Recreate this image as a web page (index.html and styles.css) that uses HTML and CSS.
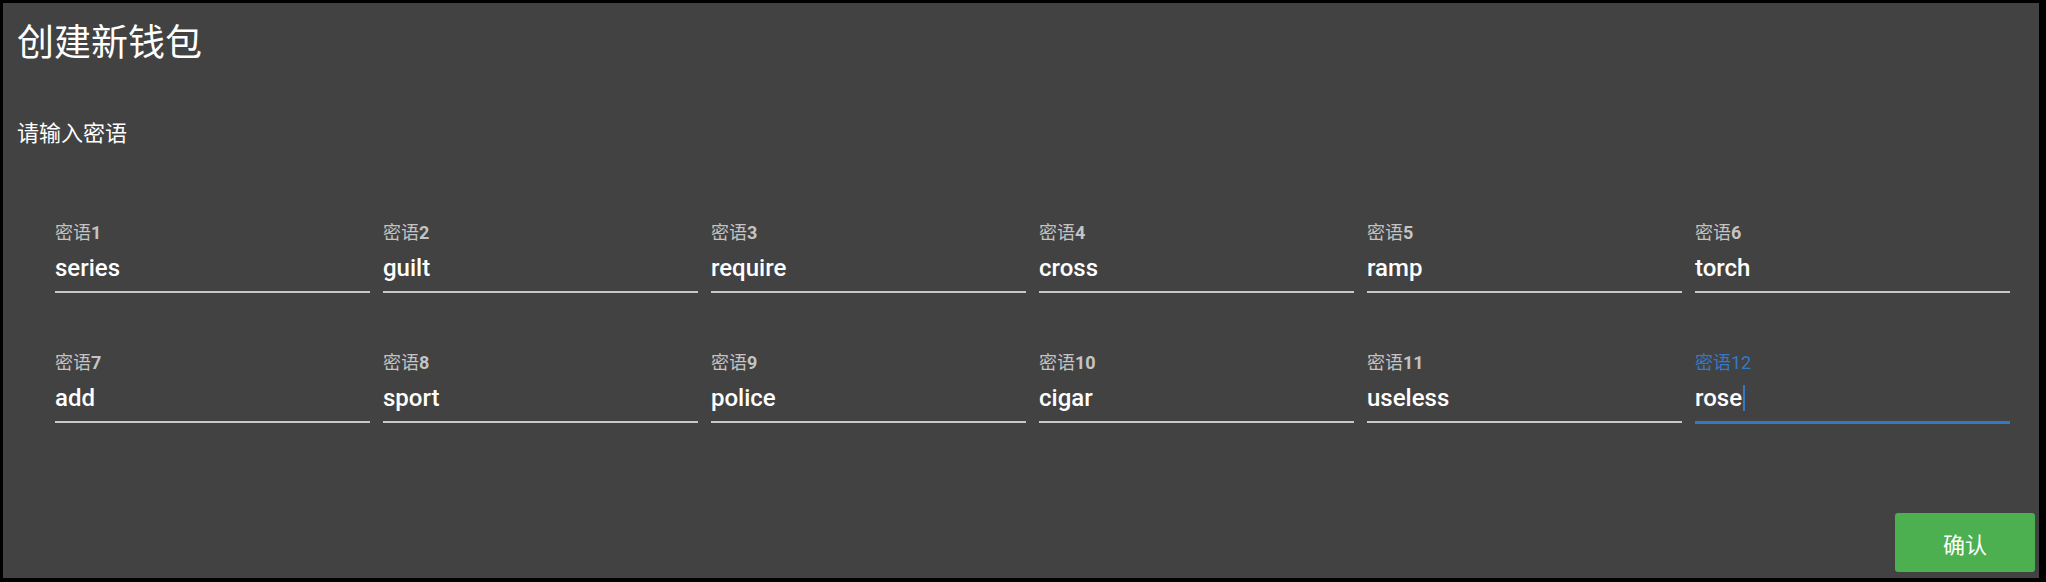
FILE: index.html
```html
<!DOCTYPE html>
<html lang="zh-CN">
<head>
    <meta charset="UTF-8">
    <meta name="viewport" content="width=device-width, initial-scale=1.0">
    <title>创建新钱包</title>
    <link rel="stylesheet" href="styles.css">
</head>
<body>
    <div class="dialog">
        <h1 class="dialog-title">创建新钱包</h1>
        <p class="dialog-hint">请输入密语</p>

        <div class="words">
            <div class="field"><label>密语<b>1</b></label><div class="value">series</div></div>
            <div class="field"><label>密语<b>2</b></label><div class="value">guilt</div></div>
            <div class="field"><label>密语<b>3</b></label><div class="value">require</div></div>
            <div class="field"><label>密语<b>4</b></label><div class="value">cross</div></div>
            <div class="field"><label>密语<b>5</b></label><div class="value">ramp</div></div>
            <div class="field"><label>密语<b>6</b></label><div class="value">torch</div></div>
            <div class="field"><label>密语<b>7</b></label><div class="value">add</div></div>
            <div class="field"><label>密语<b>8</b></label><div class="value">sport</div></div>
            <div class="field"><label>密语<b>9</b></label><div class="value">police</div></div>
            <div class="field"><label>密语<b>10</b></label><div class="value">cigar</div></div>
            <div class="field"><label>密语<b>11</b></label><div class="value">useless</div></div>
            <div class="field focused"><label>密语<b>12</b></label><div class="value">rose<span class="caret"></span></div></div>
        </div>

        <div class="actions">
            <button type="button" class="confirm-btn">确认</button>
        </div>
    </div>
</body>
</html>
```

FILE: styles.css
```css
html, body {
    height: 100%;
}

body {
    margin: 0;
    background-color: #000;
    font-family: Roboto, "Noto Sans CJK SC", sans-serif;
}

.dialog {
    box-sizing: border-box;
    height: calc(100% - 7px);
    margin: 3px 7px 4px 3px;
    padding: 19px 0 0 14px;
    background-color: #424242;
    color: #fff;
    display: flex;
    flex-direction: column;
}

.dialog-title {
    margin: 0;
    font-family: "Noto Sans CJK SC", sans-serif;
    font-size: 37px;
    font-weight: 400;
    line-height: 37px;
}

.dialog-hint {
    margin: 61px 0 0;
    font-family: "Noto Sans CJK SC", sans-serif;
    font-size: 22px;
    line-height: 22px;
}

.words {
    display: grid;
    grid-template-columns: repeat(6, 1fr);
    column-gap: 13px;
    row-gap: 60px;
    margin-top: 81px;
    padding: 0 29px 0 38px;
}

.field label {
    display: block;
    font-size: 18px;
    line-height: 20px;
    color: #c4c4c4;
}

.field label b {
    font-weight: 700;
}

.field .value {
    margin-top: 11px;
    padding-bottom: 9px;
    font-size: 24px;
    font-weight: 500;
    line-height: 28px;
    color: #fff;
    border-bottom: 2px solid #c8c8c8;
}

.field.focused label {
    color: #3479c6;
}

.field.focused label b {
    font-weight: 400;
}

.field.focused .value {
    border-bottom: 3px solid #3479c6;
    padding-bottom: 9px;
}

.caret {
    display: inline-block;
    width: 2px;
    height: 26px;
    margin-left: 1px;
    vertical-align: -5px;
    background-color: #3479c6;
}

.actions {
    margin-top: auto;
    display: flex;
    justify-content: flex-end;
    padding: 0 4px 6px 0;
}

.confirm-btn {
    width: 140px;
    height: 59px;
    border: none;
    border-radius: 3px;
    background-color: #4caf50;
    color: #fff;
    font-family: "Noto Sans CJK SC", sans-serif;
    font-size: 22px;
    cursor: pointer;
}
```
